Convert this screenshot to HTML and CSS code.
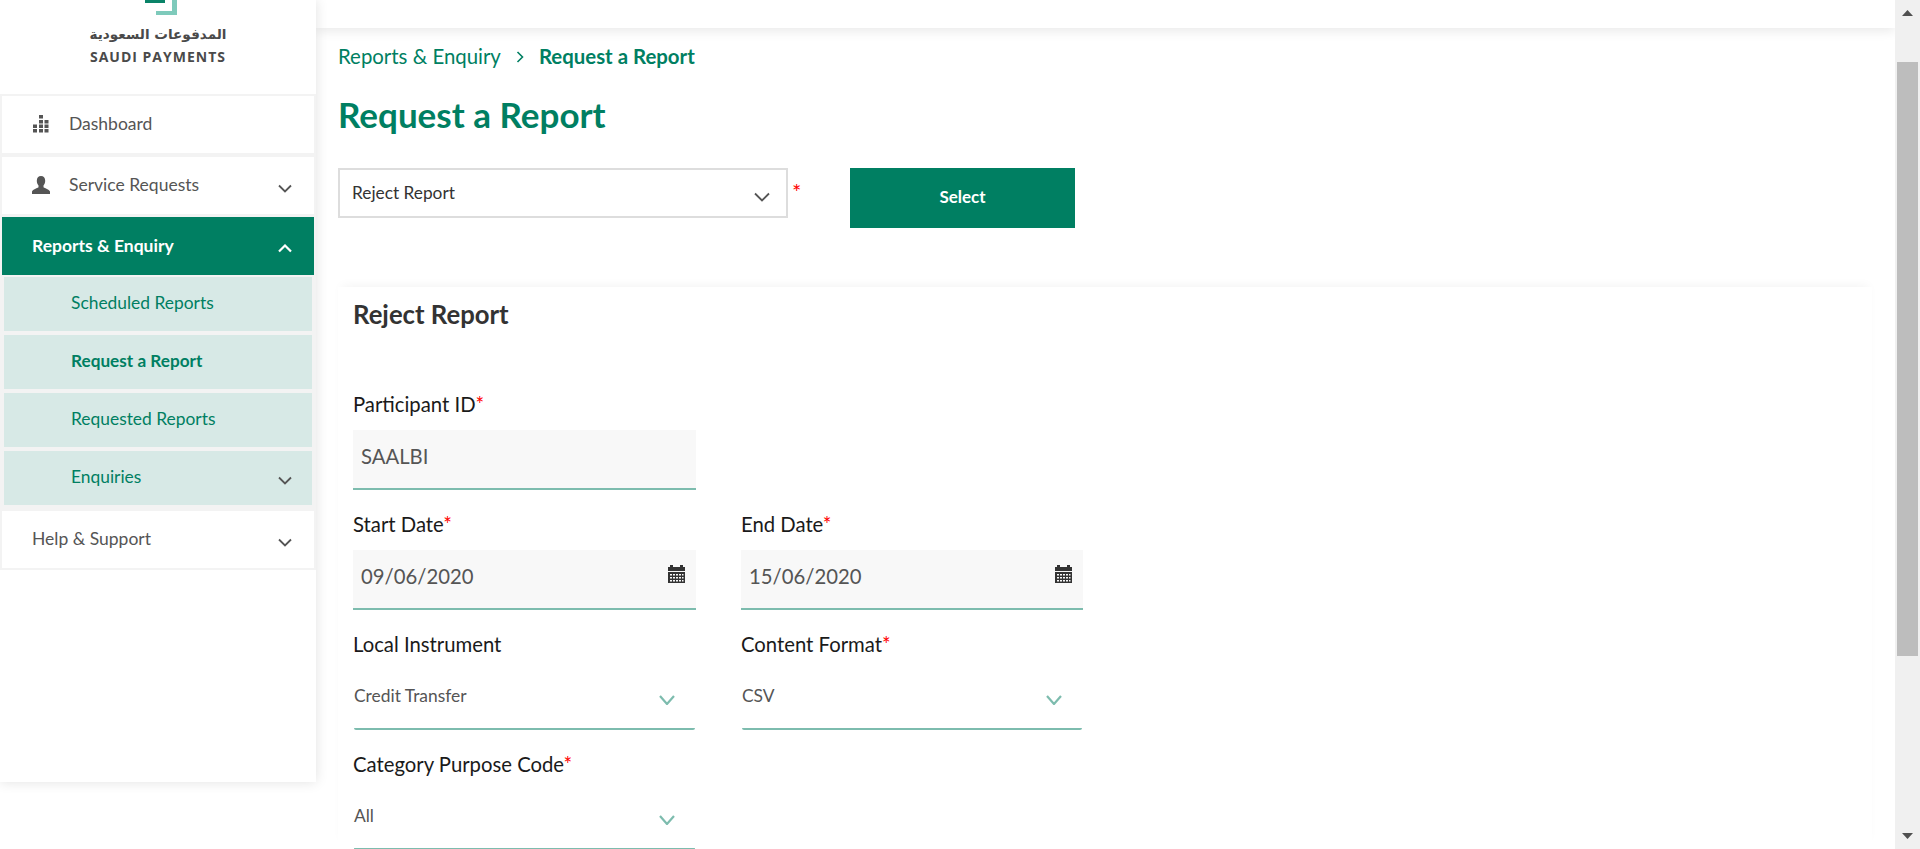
FILE: index.html
```html
<!DOCTYPE html>
<html lang="en">
  <head>
    <meta charset="UTF-8" />
    <title>Request a Report</title>
    <link rel="stylesheet" href="styles.css">
  </head>
  <body>
    <div class="app">
      <aside class="sidebar">
        <div class="logo">
          <div class="logo-mark"><span class="logo-dark"></span></div>
          <div class="logo-ar" lang="ar" dir="rtl">المدفوعات السعودية</div>
          <div class="logo-en">SAUDI PAYMENTS</div>
        </div>
        <nav class="nav">
          <a class="nav-item">
            <svg class="nav-icon" width="18" height="18" viewBox="0 0 18 18" fill="#555">
              <rect x="7" y="0" width="4" height="3.5" />
              <rect x="7" y="5" width="4" height="3.5" />
              <rect x="12.5" y="5" width="4" height="3.5" />
              <rect x="1" y="9.5" width="4" height="3.5" />
              <rect x="7" y="9.5" width="4" height="3.5" />
              <rect x="12.5" y="9.5" width="4" height="3.5" />
              <rect x="1" y="14" width="4" height="3.5" />
              <rect x="7" y="14" width="4" height="3.5" />
              <rect x="12.5" y="14" width="4" height="3.5" />
            </svg>
            Dashboard
          </a>
          <a class="nav-item">
            <svg class="nav-icon" width="18" height="18" viewBox="0 0 18 18" fill="#555">
              <path d="M9 0c2.6 0 4.2 2 4.2 4.8 0 2-.8 3.6-1.7 4.6v1.8c1.6 1.2 5.5 2 6.5 4.3v2.5H0v-2.5c1-2.3 4.9-3.1 6.5-4.3V9.400C5.600 8.400 4.800 6.800 4.800 4.800 4.800 2 6.400 0 9 0z" />
            </svg>
            Service Requests
            <svg class="chevron" width="14" height="9" viewBox="0 0 14 9"><path d="M1 1.500l6 6 6-6" /></svg>
          </a>
          <a class="nav-item active">
            Reports &amp; Enquiry
            <svg class="chevron" width="14" height="9" viewBox="0 0 14 9"><path d="M1 7.500l6-6 6 6" /></svg>
          </a>
          <div class="subnav">
            <a class="sub-item">Scheduled Reports</a>
            <a class="sub-item current">Request a Report</a>
            <a class="sub-item">Requested Reports</a>
            <a class="sub-item">
              Enquiries
              <svg class="chevron" width="14" height="9" viewBox="0 0 14 9"><path d="M1 1.500l6 6 6-6" /></svg>
            </a>
          </div>
          <a class="nav-item last">
            Help &amp; Support
            <svg class="chevron" width="14" height="9" viewBox="0 0 14 9"><path d="M1 1.500l6 6 6-6" /></svg>
          </a>
        </nav>
      </aside>

      <main class="main">
        <div class="topbar"></div>
        <div class="content">
          <div class="breadcrumb">
            <span>Reports &amp; Enquiry</span>
            <svg class="crumb-sep" width="8" height="12" viewBox="0 0 8 12"><path d="M1.500 1l5 5-5 5" /></svg>
            <b>Request a Report</b>
          </div>
          <h1 class="page-title">Request a Report</h1>

          <div class="report-row">
            <div class="report-select">
              Reject Report
              <svg class="chevron" width="16" height="10" viewBox="0 0 16 10"><path d="M1 1.500l7 7 7-7" /></svg>
            </div>
            <span class="report-star">*</span>
            <button class="select-btn">Select</button>
          </div>

          <section class="card">
            <h2 class="card-title">Reject Report</h2>
            <div class="form-grid">
              <div class="field">
                <label>Participant ID<i>*</i></label>
                <div class="input">SAALBI</div>
              </div>
              <div class="field"></div>

              <div class="field">
                <label>Start Date<i>*</i></label>
                <div class="input">
                  09/06/2020
                  <svg class="cal" width="17" height="18" viewBox="0 0 17 18"><use href="#cal-icon" /></svg>
                </div>
              </div>
              <div class="field">
                <label>End Date<i>*</i></label>
                <div class="input">
                  15/06/2020
                  <svg class="cal" width="17" height="18" viewBox="0 0 17 18"><use href="#cal-icon" /></svg>
                </div>
              </div>

              <div class="field">
                <label>Local Instrument</label>
                <div class="dropdown">
                  Credit Transfer
                  <svg class="drop-arrow" width="16" height="10" viewBox="0 0 16 10"><path d="M1 1l7 8 7-8" /></svg>
                </div>
              </div>
              <div class="field">
                <label>Content Format<i>*</i></label>
                <div class="dropdown">
                  CSV
                  <svg class="drop-arrow" width="16" height="10" viewBox="0 0 16 10"><path d="M1 1l7 8 7-8" /></svg>
                </div>
              </div>

              <div class="field">
                <label>Category Purpose Code<i>*</i></label>
                <div class="dropdown">
                  All
                  <svg class="drop-arrow" width="16" height="10" viewBox="0 0 16 10"><path d="M1 1l7 8 7-8" /></svg>
                </div>
              </div>
            </div>
          </section>
        </div>
      </main>

      <div class="scrollbar">
        <svg class="scroll-arrow" width="11" height="6" viewBox="0 0 11 6"><path d="M5.500 0L11 6H0z" /></svg>
        <div class="scroll-thumb"></div>
        <svg class="scroll-arrow down" width="11" height="6" viewBox="0 0 11 6"><path d="M0 0h11L5.500 6z" /></svg>
      </div>
    </div>

    <svg width="0" height="0" class="defs">
      <symbol id="cal-icon" viewBox="0 0 17 18">
        <path fill="#333" d="M2 0h3v2h7V0h3v2h2v4H0V2h2z" />
        <path fill="#333" fill-rule="evenodd" d="M0 7h17v11H0zM2 9v1.500h2V9zm3 0v1.500h2V9zm3 0v1.500h2V9zm3 0v1.500h2V9zm3 0v1.500h1.500V9zM2 12v1.500h2V12zm3 0v1.500h2V12zm3 0v1.500h2V12zm3 0v1.500h2V12zm3 0v1.500h1.500V12zM2 15v1.500h2V15zm3 0v1.500h2V15zm3 0v1.500h2V15zm3 0v1.500h2V15zm3 0v1.500h1.500V15z" />
      </symbol>
    </svg>
  </body>
</html>
```

FILE: styles.css
```css
* {
  box-sizing: border-box;
}

html,
body {
  margin: 0;
  height: 849px;
  overflow: hidden;
}

body {
  font-family: "Lato", "Open Sans", sans-serif;
  color: #222;
  background: #fff;
}

.defs {
  display: none;
}

.app {
  display: flex;
  height: 849px;
  overflow: hidden;
}

/* sidebar */
.sidebar {
  width: 316px;
  height: 782px;
  flex: none;
  background: #fff;
  box-shadow: 0 0 12px rgba(0, 0, 0, 0.12);
  position: relative;
  z-index: 2;
}

.logo {
  height: 94px;
  display: flex;
  flex-direction: column;
  align-items: center;
}

.logo-mark {
  width: 33px;
  height: 15px;
  border-right: 5px solid #7ecabb;
  position: relative;
  align-self: flex-start;
  margin-left: 144px;
}

.logo-mark::after {
  content: "";
  position: absolute;
  right: 0;
  bottom: 0;
  width: 16px;
  height: 4px;
  background: #7ecabb;
}

.logo-dark {
  display: block;
  width: 20px;
  height: 3px;
  margin-left: 1px;
  background: #0a8368;
}

.logo-ar {
  margin-top: 9px;
  height: 20px;
  line-height: 20px;
  font-family: "DejaVu Sans", sans-serif;
  font-size: 13.600px;
  font-weight: bold;
  color: #4a4a4a;
}

.logo-en {
  margin-top: 5px;
  line-height: 16px;
  font-family: "Open Sans", sans-serif;
  font-size: 14px;
  font-weight: 700;
  letter-spacing: 1px;
  color: #4a4a4a;
}

.nav {
  background: #f3f3f3;
  padding: 2px 2px;
  height: 476px;
}

.nav-item {
  display: flex;
  align-items: center;
  height: 57px;
  padding: 0 22px 2px 30px;
  margin-bottom: 4px;
  background: #fff;
  font-size: 17.500px;
  color: #555;
}

.nav-item:nth-child(2) {
  margin-bottom: 3px;
}

.nav-item.active {
  height: 58px;
  margin-bottom: 2px;
  background: #007f62;
  color: #fff;
  font-weight: 700;
}

.nav-item.last {
  margin-bottom: 0;
}

.nav-icon {
  margin-right: 19px;
  flex: none;
}

.chevron {
  margin-left: auto;
  margin-top: 7px;
  fill: none;
  stroke: #555;
  stroke-width: 1.800;
}

.nav-item.active .chevron {
  stroke: #fff;
  stroke-width: 2.200;
}

.subnav {
  padding: 0 2px;
  margin-bottom: 6px;
}

.sub-item {
  display: flex;
  align-items: center;
  height: 54px;
  margin-bottom: 4px;
  padding: 0 20px 4px 67px;
  background: #d7e9e6;
  font-size: 17.400px;
  color: #007f62;
}

.sub-item .chevron {
  margin-top: 9px;
}

.sub-item:last-child {
  margin-bottom: 0;
}

.sub-item.current {
  font-size: 17.200px;
  font-weight: 700;
}

/* main area */
.main {
  flex: 1;
  min-width: 0;
}

.topbar {
  height: 28px;
  background: #fff;
  box-shadow: 0 3px 12px rgba(0, 0, 0, 0.09);
}

.content {
  padding: 17px 23px 0 22px;
}

.breadcrumb {
  display: flex;
  align-items: center;
  height: 24px;
  padding-bottom: 2px;
  font-size: 20.400px;
  color: #007f62;
}

.breadcrumb b {
  font-weight: 700;
}

.crumb-sep {
  margin: 2px 15px 0 15px;
  fill: none;
  stroke: #007f62;
  stroke-width: 1.600;
}

.page-title {
  margin: 23px 0 32px;
  line-height: 44px;
  font-size: 35px;
  font-weight: 700;
  color: #007f62;
}

.report-row {
  display: flex;
  align-items: flex-start;
  height: 60px;
}

.report-select {
  width: 450px;
  height: 50px;
  display: flex;
  align-items: center;
  padding: 0 16px 2px 12px;
  border: 2px solid #ddd;
  font-size: 17.300px;
  color: #333;
}

.report-select .chevron {
  margin-top: 9px;
}

.report-star {
  width: 62px;
  padding: 14px 0 0 4px;
  line-height: 20px;
  font-size: 22px;
  color: #f00;
}

.select-btn {
  width: 225px;
  height: 60px;
  padding: 0 0 4px;
  border: 0;
  background: #007f62;
  color: #fff;
  font-family: inherit;
  font-size: 17px;
  font-weight: 700;
}

.card {
  margin-top: 59px;
  padding: 0 15px;
  height: 560px;
  background: #fff;
  box-shadow: 0 -5px 10px -4px rgba(0, 0, 0, 0.05);
}

.card-title {
  margin: 0;
  padding-top: 11px;
  line-height: 32px;
  font-size: 25.700px;
  font-weight: 700;
  color: #333;
}

.form-grid {
  display: grid;
  grid-template-columns: 343px 342px;
  column-gap: 45px;
  row-gap: 24px;
  margin-top: 64px;
}

.field label {
  display: block;
  height: 24px;
  margin-bottom: 12px;
  line-height: 20px;
  font-size: 20.300px;
  color: #1a1a1a;
}

.field i {
  font-style: normal;
  color: #f00;
}

.input {
  position: relative;
  height: 60px;
  padding: 14px 0 0 8px;
  line-height: 24px;
  background: #f8f8f8;
  border-bottom: 2px solid #7dbcae;
  font-size: 20.300px;
  color: #555;
}

.cal {
  position: absolute;
  right: 11px;
  top: 15px;
}

.dropdown {
  display: flex;
  align-items: flex-start;
  height: 60px;
  padding: 14px 20px 0 0;
  line-height: 24px;
  border-bottom: 2px solid #7dbcae;
  border-radius: 2px;
  margin: 0 1px;
  font-size: 17.400px;
  color: #555;
}

.drop-arrow {
  margin: 11px 0 0 auto;
  fill: none;
  stroke: #7dbcae;
  stroke-width: 2.200;
}

/* scrollbar */
.scrollbar {
  width: 25px;
  flex: none;
  display: flex;
  flex-direction: column;
  align-items: center;
  background: #f0f0f0;
  position: relative;
  z-index: 3;
}

.scroll-arrow {
  fill: #505050;
  margin-top: 10px;
  flex: none;
}

.scroll-arrow.down {
  margin-top: auto;
  margin-bottom: 10px;
}

.scroll-thumb {
  width: 21px;
  height: 594px;
  margin-top: 46px;
  background: #bdbdbd;
}
```
